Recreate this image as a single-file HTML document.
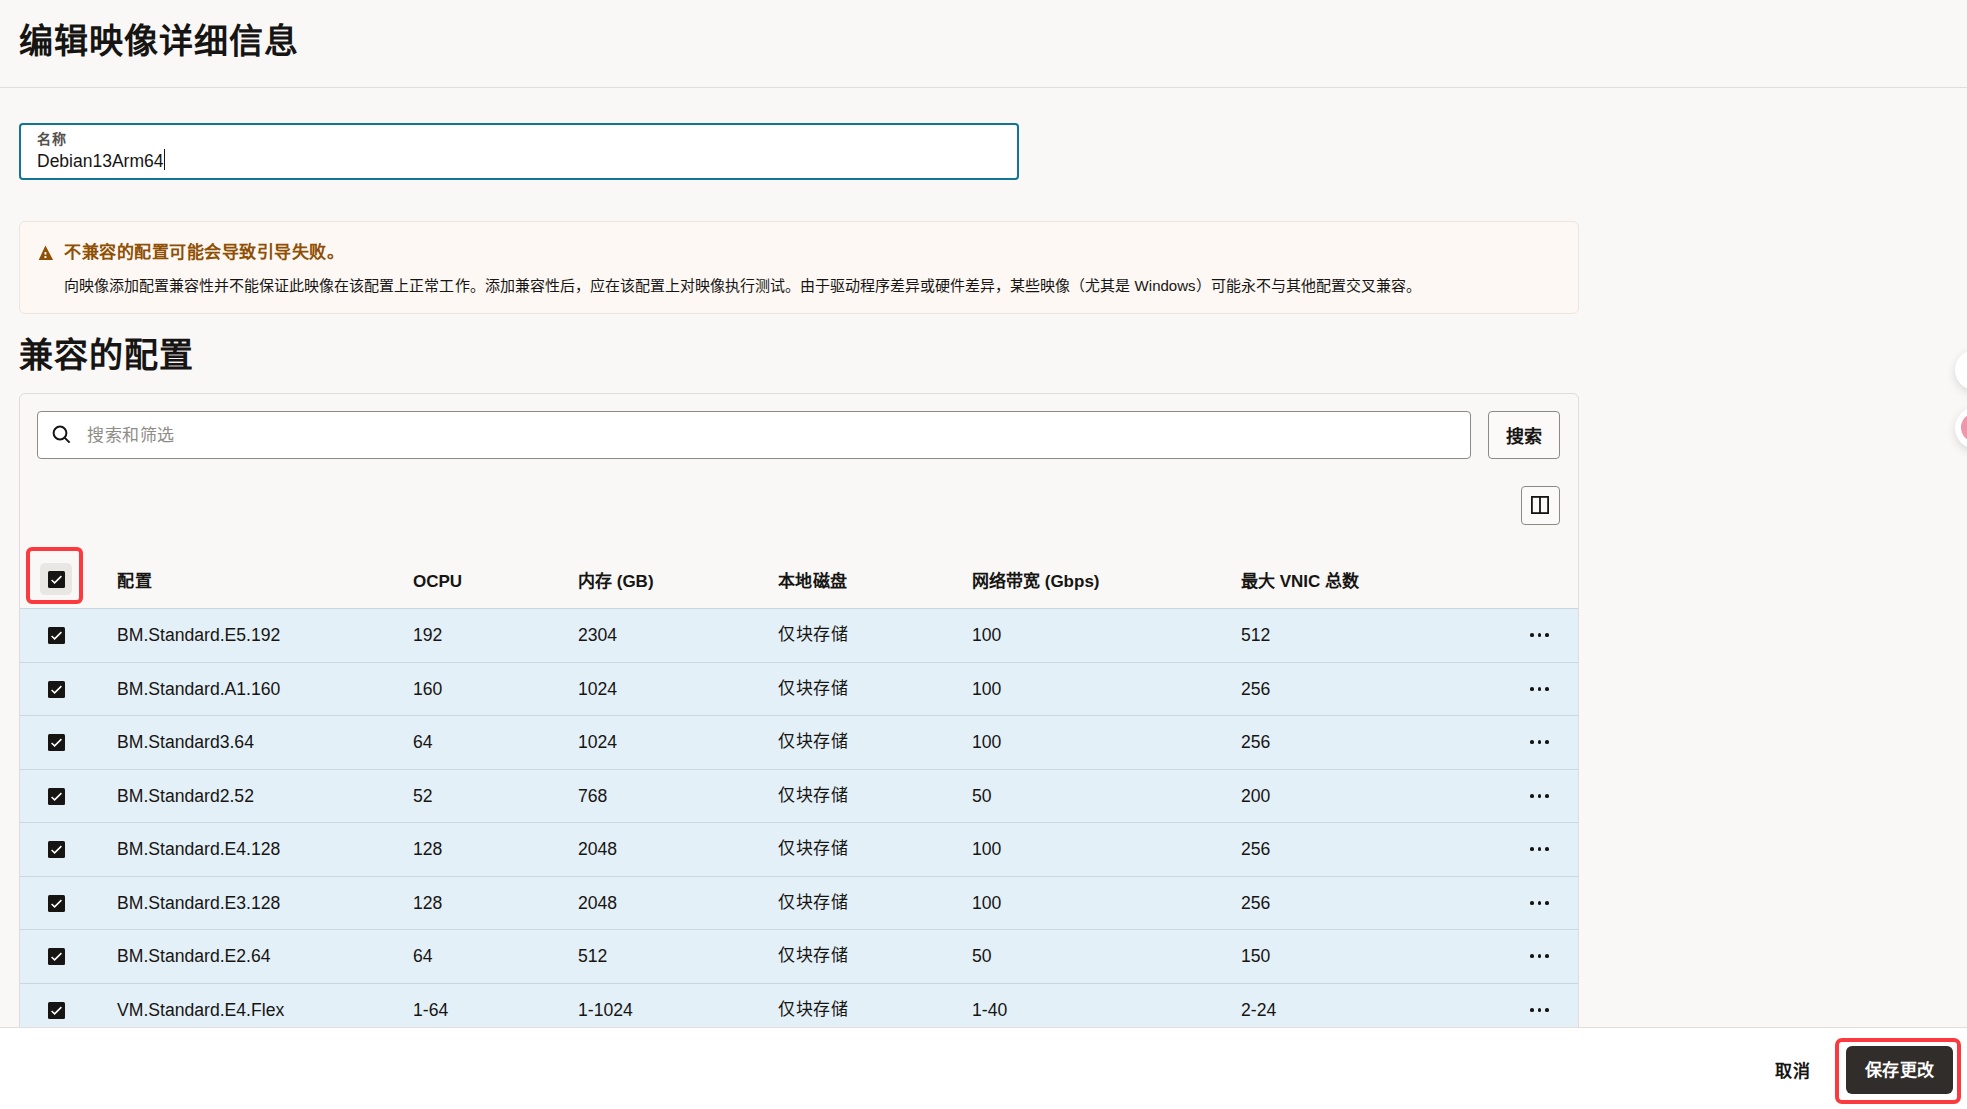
<!DOCTYPE html>
<html lang="zh-CN"><head><meta charset="utf-8">
<style>
*{box-sizing:border-box;margin:0;padding:0}
html,body{width:1967px;height:1109px;overflow:hidden;background:#f9f8f6;font-family:"Liberation Sans",sans-serif;color:#161513}
#hdr{position:absolute;left:0;top:0;width:1967px;height:88px;border-bottom:1px solid #e2dfdb}
#title{position:absolute;left:19px;top:17px;font-size:34px;letter-spacing:1px;font-weight:bold;line-height:48px;white-space:nowrap}
#name{position:absolute;left:19px;top:123px;width:1000px;height:57px;border:2px solid #127594;border-radius:4px;background:#fff}
#name .lbl{position:absolute;left:16px;top:5px;font-size:14px;letter-spacing:1px;line-height:18px;color:#55524e;font-weight:bold}
#name .val{position:absolute;left:16px;top:25px;font-size:17.5px;line-height:22px;color:#161513}
#name .caret{position:absolute;left:142.5px;top:24px;width:1.2px;height:21px;background:#161513}
#warn{position:absolute;left:19px;top:221px;width:1560px;height:93px;background:#fdf8f3;border:1px solid #ebe6e0;border-radius:6px}
#warn .ic{position:absolute;left:18px;top:22px}
#warn .t{position:absolute;left:44px;top:20px;font-size:17px;letter-spacing:0.5px;line-height:22px;font-weight:bold;color:#8f4f04;white-space:nowrap}
#warn .b{position:absolute;left:44px;top:54px;font-size:15px;letter-spacing:0.02px;line-height:20px;color:#161513;white-space:nowrap}
#h2{position:absolute;left:19px;top:332px;font-size:34px;letter-spacing:1px;line-height:46px;font-weight:bold;white-space:nowrap}
#tbl{position:absolute;left:19px;top:393px;width:1560px;height:800px;border:1px solid #dfdcd9;border-radius:6px}
#search{position:absolute;left:37px;top:411px;width:1434px;height:48px;border:1px solid #8d8a86;border-radius:4px;background:#fff}
#search svg{position:absolute;left:14px;top:13px}
#search .ph{position:absolute;left:49px;top:13px;font-size:17px;letter-spacing:0.6px;line-height:22px;color:#8f8c88}
#sbtn{position:absolute;left:1488px;top:411px;width:72px;height:48px;border:1px solid #8d8a86;border-radius:4px;background:#fbfaf8;font-size:18px;letter-spacing:0.5px;font-weight:bold;text-align:center;line-height:50px}
#cbtn{position:absolute;left:1521px;top:486px;width:39px;height:39px;border:1px solid #8d8a86;border-radius:4px;background:#fbfaf8}
#cbtn svg{position:absolute;left:9px;top:9px}
.row{position:absolute;left:20px;width:1558px;height:54px;background:#e4f0f7;border-top:1px solid #c9d8e0}
.z{font-size:17px!important;letter-spacing:0.5px}
.cell{position:absolute;top:14px;font-size:17.6px;line-height:24px;white-space:nowrap;color:#161513}
.hcell{position:absolute;top:570px;font-size:17px;line-height:24px;font-weight:bold;white-space:nowrap}
.cb{position:absolute;left:28px;top:18px;width:17px;height:17px;background:#161513;border-radius:1.5px}
.cb svg{position:absolute;left:0;top:0}
.dots{position:absolute;left:1510px;top:24px;width:20px;height:5px}
.dots i{position:absolute;top:0.2px;width:3.7px;height:3.7px;border-radius:50%;background:#161513}
.dots i:nth-child(1){left:0}.dots i:nth-child(2){left:7.5px}.dots i:nth-child(3){left:15px}
#hcb{position:absolute;left:40px;top:563px;width:32px;height:32px;background:#e9e7e4;border-radius:5px}
#hcb .cb{left:8px;top:8px}
#red1{position:absolute;left:26px;top:547px;width:57px;height:57px;border:4px solid #fa3a3e;border-radius:6px}
#foot{position:absolute;left:0;top:1027px;width:1967px;height:82px;background:#fff;border-top:1px solid #e2dfdb}
#cancel{position:absolute;left:1775px;top:1060px;font-size:17px;letter-spacing:1px;line-height:24px;font-weight:bold}
#save{position:absolute;left:1846px;top:1046px;width:107px;height:48px;background:#312d2a;border-radius:6px;color:#fff;font-size:17px;letter-spacing:0.5px;font-weight:bold;text-align:center;line-height:50px}
#red2{position:absolute;left:1835px;top:1038px;width:126px;height:66px;border:4px solid #fa3a3e;border-radius:7px}
.fab{position:absolute;width:38px;height:38px;border-radius:50%;background:#fff;box-shadow:0 3px 10px rgba(0,0,0,.13)}
</style></head>
<body>
<div id="hdr"><div id="title">编辑映像详细信息</div></div>
<div id="name"><div class="lbl">名称</div><div class="val">Debian13Arm64</div><div class="caret"></div></div>
<div id="warn"><svg class="ic" width="17" height="17" viewBox="0 0 17 17"><path d="M7.4 1.6 L15.1 16 L0.7 16 Z" fill="#8f4f04"/><rect x="6.5" y="8" width="1.9" height="2.6" fill="#fff"/><rect x="6.5" y="12" width="1.9" height="2.1" fill="#fff"/></svg><div class="t">不兼容的配置可能会导致引导失败。</div><div class="b">向映像添加配置兼容性并不能保证此映像在该配置上正常工作。添加兼容性后，应在该配置上对映像执行测试。由于驱动程序差异或硬件差异，某些映像（尤其是 Windows）可能永不与其他配置交叉兼容。</div></div>
<div id="h2">兼容的配置</div>
<div id="tbl"></div>
<div id="search"><svg width="20" height="20" viewBox="0 0 20 20"><circle cx="8" cy="8" r="6.4" fill="none" stroke="#161513" stroke-width="2"/><path d="M12.6 12.6 L17.6 17.6" stroke="#161513" stroke-width="2"/></svg><div class="ph">搜索和筛选</div></div>
<div id="sbtn">搜索</div>
<div id="cbtn"><svg width="18" height="18" viewBox="0 0 18 18"><rect x="0.9" y="0.9" width="16.2" height="16.2" fill="none" stroke="#161513" stroke-width="1.8"/><path d="M9 0.9 V17.1" stroke="#161513" stroke-width="1.8"/></svg></div>
<div id="hcb"><div class="cb"><svg width="17" height="17" viewBox="0 0 17 17"><path d="M3.6 9.0 L6.6 11.9 L13.4 5.1" fill="none" stroke="#fff" stroke-width="1.5"/></svg></div></div>
<div id="red1"></div>
<div class="hcell" style="left:117px;letter-spacing:0.8px">配置</div>
<div class="hcell" style="left:413px">OCPU</div>
<div class="hcell" style="left:578px">内存 (GB)</div>
<div class="hcell" style="left:778px;letter-spacing:0.4px">本地磁盘</div>
<div class="hcell" style="left:972px">网络带宽 (Gbps)</div>
<div class="hcell" style="left:1241px">最大 VNIC 总数</div>
<div class="row" style="top:608.0px"><div class="cb"><svg width="17" height="17" viewBox="0 0 17 17"><path d="M3.6 9.0 L6.6 11.9 L13.4 5.1" fill="none" stroke="#fff" stroke-width="1.5"/></svg></div><div class="cell" style="left:97px">BM.Standard.E5.192</div><div class="cell" style="left:393px">192</div><div class="cell" style="left:558px">2304</div><div class="cell z" style="left:758px">仅块存储</div><div class="cell" style="left:952px">100</div><div class="cell" style="left:1221px">512</div><div class="dots"><i></i><i></i><i></i></div></div>
<div class="row" style="top:662.0px"><div class="cb"><svg width="17" height="17" viewBox="0 0 17 17"><path d="M3.6 9.0 L6.6 11.9 L13.4 5.1" fill="none" stroke="#fff" stroke-width="1.5"/></svg></div><div class="cell" style="left:97px">BM.Standard.A1.160</div><div class="cell" style="left:393px">160</div><div class="cell" style="left:558px">1024</div><div class="cell z" style="left:758px">仅块存储</div><div class="cell" style="left:952px">100</div><div class="cell" style="left:1221px">256</div><div class="dots"><i></i><i></i><i></i></div></div>
<div class="row" style="top:715.0px"><div class="cb"><svg width="17" height="17" viewBox="0 0 17 17"><path d="M3.6 9.0 L6.6 11.9 L13.4 5.1" fill="none" stroke="#fff" stroke-width="1.5"/></svg></div><div class="cell" style="left:97px">BM.Standard3.64</div><div class="cell" style="left:393px">64</div><div class="cell" style="left:558px">1024</div><div class="cell z" style="left:758px">仅块存储</div><div class="cell" style="left:952px">100</div><div class="cell" style="left:1221px">256</div><div class="dots"><i></i><i></i><i></i></div></div>
<div class="row" style="top:769.0px"><div class="cb"><svg width="17" height="17" viewBox="0 0 17 17"><path d="M3.6 9.0 L6.6 11.9 L13.4 5.1" fill="none" stroke="#fff" stroke-width="1.5"/></svg></div><div class="cell" style="left:97px">BM.Standard2.52</div><div class="cell" style="left:393px">52</div><div class="cell" style="left:558px">768</div><div class="cell z" style="left:758px">仅块存储</div><div class="cell" style="left:952px">50</div><div class="cell" style="left:1221px">200</div><div class="dots"><i></i><i></i><i></i></div></div>
<div class="row" style="top:822.0px"><div class="cb"><svg width="17" height="17" viewBox="0 0 17 17"><path d="M3.6 9.0 L6.6 11.9 L13.4 5.1" fill="none" stroke="#fff" stroke-width="1.5"/></svg></div><div class="cell" style="left:97px">BM.Standard.E4.128</div><div class="cell" style="left:393px">128</div><div class="cell" style="left:558px">2048</div><div class="cell z" style="left:758px">仅块存储</div><div class="cell" style="left:952px">100</div><div class="cell" style="left:1221px">256</div><div class="dots"><i></i><i></i><i></i></div></div>
<div class="row" style="top:876.0px"><div class="cb"><svg width="17" height="17" viewBox="0 0 17 17"><path d="M3.6 9.0 L6.6 11.9 L13.4 5.1" fill="none" stroke="#fff" stroke-width="1.5"/></svg></div><div class="cell" style="left:97px">BM.Standard.E3.128</div><div class="cell" style="left:393px">128</div><div class="cell" style="left:558px">2048</div><div class="cell z" style="left:758px">仅块存储</div><div class="cell" style="left:952px">100</div><div class="cell" style="left:1221px">256</div><div class="dots"><i></i><i></i><i></i></div></div>
<div class="row" style="top:929.0px"><div class="cb"><svg width="17" height="17" viewBox="0 0 17 17"><path d="M3.6 9.0 L6.6 11.9 L13.4 5.1" fill="none" stroke="#fff" stroke-width="1.5"/></svg></div><div class="cell" style="left:97px">BM.Standard.E2.64</div><div class="cell" style="left:393px">64</div><div class="cell" style="left:558px">512</div><div class="cell z" style="left:758px">仅块存储</div><div class="cell" style="left:952px">50</div><div class="cell" style="left:1221px">150</div><div class="dots"><i></i><i></i><i></i></div></div>
<div class="row" style="top:983.0px"><div class="cb"><svg width="17" height="17" viewBox="0 0 17 17"><path d="M3.6 9.0 L6.6 11.9 L13.4 5.1" fill="none" stroke="#fff" stroke-width="1.5"/></svg></div><div class="cell" style="left:97px">VM.Standard.E4.Flex</div><div class="cell" style="left:393px">1-64</div><div class="cell" style="left:558px">1-1024</div><div class="cell z" style="left:758px">仅块存储</div><div class="cell" style="left:952px">1-40</div><div class="cell" style="left:1221px">2-24</div><div class="dots"><i></i><i></i><i></i></div></div>
<div id="foot"></div><div id="cancel">取消</div>
<div id="save">保存更改</div>
<div id="red2"></div>
<div class="fab" style="left:1955px;top:349.5px;width:40px;height:40px"></div>
<div class="fab" style="left:1954.5px;top:406.5px;width:42px;height:42px"><div style="position:absolute;left:6.5px;top:6.5px;width:29px;height:29px;border-radius:50%;background:#ee97ab"></div></div>
</body></html>
